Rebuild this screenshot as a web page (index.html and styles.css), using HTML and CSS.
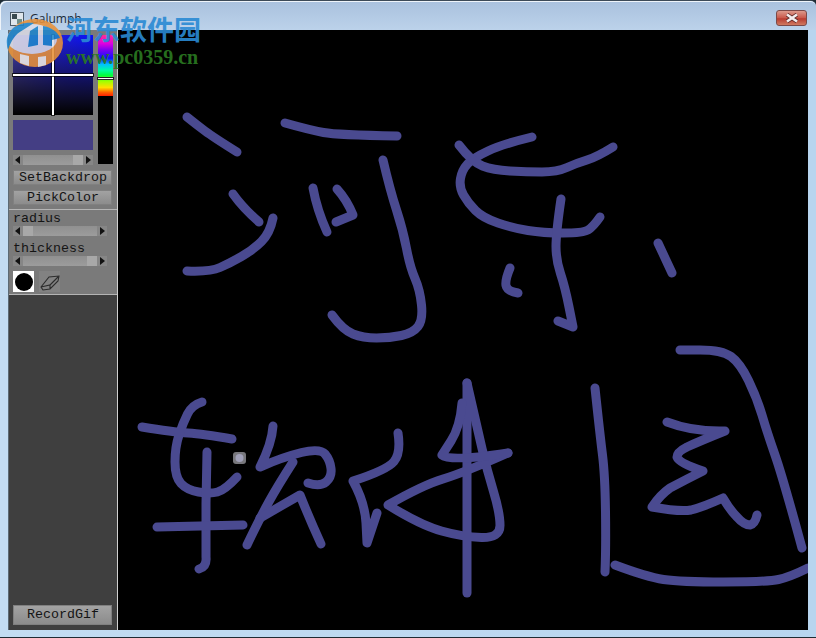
FILE: index.html
```html
<!DOCTYPE html>
<html lang="en">
<head>
  <meta charset="UTF-8">
  <title>Galumph</title>
  <link rel="stylesheet" href="styles.css">
</head>
<body>
  <div class="window">
    <div class="titlebar">
      <svg class="app-icon" width="14" height="14" viewBox="0 0 14 14">
        <rect x="0.5" y="0.5" width="13" height="13" fill="#dfe6ec" stroke="#4a5a68"/>
        <rect x="2" y="2" width="5" height="5" fill="#3a4a50"/>
        <rect x="7" y="7" width="5" height="5" fill="#6f8f8a"/>
      </svg>
      <span class="title">Galumph</span>
      <div class="close">
        <svg width="14" height="10" viewBox="0 0 14 10">
          <path d="M2 1.5 L12 8.5 M12 1.5 L2 8.5" stroke="#5a2a28" stroke-width="4"/>
          <path d="M2 1.5 L12 8.5 M12 1.5 L2 8.5" stroke="#f4eeee" stroke-width="2.6"/>
        </svg>
      </div>
    </div>
    <div class="main">
      <div class="sidebar">
        <div class="panel panel-color">
          <div class="picker">
            <div class="picker-left">
              <div class="palette">
                <div class="cross-v"></div>
                <div class="cross-h"></div>
              </div>
              <div class="swatch"></div>
              <div class="scroll">
                <span class="arrow arrow-l"></span>
                <span class="thumb thumb-end"></span>
                <span class="arrow arrow-r"></span>
              </div>
            </div>
            <div class="hue">
              <div class="hue-colors"><div class="hue-mark"></div></div>
            </div>
          </div>
          <button class="btn">SetBackdrop</button>
          <button class="btn">PickColor</button>
        </div>
        <div class="panel panel-brush">
          <div class="label">radius</div>
          <div class="scroll scroll-wide">
            <span class="arrow arrow-l"></span>
            <span class="thumb thumb-start"></span>
            <span class="arrow arrow-r"></span>
          </div>
          <div class="label">thickness</div>
          <div class="scroll scroll-wide">
            <span class="arrow arrow-l"></span>
            <span class="thumb thumb-end"></span>
            <span class="arrow arrow-r"></span>
          </div>
          <div class="tools">
            <div class="tool-brush"><div class="tool-dot"></div></div>
            <div class="tool-eraser">
              <svg width="20" height="20" viewBox="0 0 20 20">
                <path d="M1 15 L9 5 L19 4 L18 9 L10 17 L3 18 Z M1 15 L10 13 L10 17 M10 13 L18 5" fill="none" stroke="#2c2c2c" stroke-width="1.1"/>
              </svg>
            </div>
          </div>
        </div>
        <div class="panel-rest">
          <button class="btn btn-record">RecordGif</button>
        </div>
      </div>
      <div class="canvas">
        <svg class="drawing" width="690" height="600" viewBox="118 30 690 600">
          <g class="strokes">
            <path d="M187 117 Q197 125 205 131 Q213 137 237 152"/>
            <path d="M285 123 Q310 130 323.5 132.5 Q337 135 397 136"/>
            <path d="M383 160 Q390 190 396.5 210 Q403 230 406.5 248.5 Q410 267 415 278.5 Q420 290 421.5 305 Q423 320 418 326.5 Q413 333 401.5 335.5 Q390 338 376.5 338 Q363 338 353 334 Q343 330 332 315"/>
            <path d="M233 194 Q243 208 259 222"/>
            <path d="M273 218 Q270 233 261.5 241.5 Q253 250 241.5 256.5 Q230 263 220 267.5 Q210 272 187 271"/>
            <path d="M313 188 Q317 210 327 232"/>
            <path d="M337 189 Q347 200 353 215 L336 222"/>
            <path d="M532 137 Q503 144 488 151 Q473 158 467.5 164 Q462 170 460.5 178.5 Q459 187 463.5 195 Q468 203 475.5 210.5 Q483 218 498 223 Q513 228 528 230.5 Q543 233 563 233 Q583 233 588 230 Q593 227 600 217"/>
            <path d="M459 145 Q472 162 482.5 166 Q493 170 510 171 Q527 172 542 172 Q557 172 567 167.5 Q577 163 587 160 Q597 157 613 147"/>
            <path d="M561 199 Q556 233 556 246.5 Q556 260 560.5 273.5 Q565 287 569 307 L573 327 L558 321"/>
            <path d="M510 268 Q505 280 506 285.5 Q507 291 518 293"/>
            <path d="M658 243 L672 273"/>
            <path d="M142 427 Q173 432 188 433 Q203 434 232 439"/>
            <path d="M202 402 Q192 405 187.5 414 Q183 423 179 435 Q175 447 175 462 Q175 477 181 483.5 Q187 490 198.5 492 Q210 494 217.5 492 Q225 490 237 477"/>
            <path d="M207 452 L206 503 L206 557 Q207 567 199 569"/>
            <path d="M157 527 L243 525"/>
            <path d="M273 426 Q272 443 260 467 Q283 457 301.5 452.5 Q320 448 325 454 Q330 460 331 468.5 Q332 477 326 482 Q320 487 308 483"/>
            <path d="M293 462 Q277 487 268.5 502.5 Q260 518 247 545"/>
            <path d="M260 518 L300 495 Q310 520 321 544"/>
            <path d="M398 433 Q401 453 394 461.5 Q387 470 353 481 Q365 503 366 523 L367 543 L377 513"/>
            <path d="M508 453 Q463 473 443 479 Q423 485 388 505 Q420 525 441.5 531 Q463 537 481.5 537.5 Q500 538 500 525.5 Q500 513 493.5 491.5 Q487 470 482 448.5 Q477 427 467 383"/>
            <path d="M467 383 L467 593"/>
            <path d="M462 403 Q460 427 451 441 L442 455 Q450 462 508 453"/>
            <path d="M595 388 Q600 435 602.5 455 Q605 475 605.5 511.5 Q606 548 605 572"/>
            <path d="M615 565 Q647 577 663.5 579.5 Q680 582 723.5 582 Q767 582 778.5 579.5 Q790 577 808 568"/>
            <path d="M680 350 L700 350 Q722 350 731 356.5 Q740 363 748.5 380.5 Q757 398 762 415 Q767 432 775 455 Q783 478 802 548"/>
            <path d="M667 422 Q693 432 725 431 Q700 441 687 447 Q677 452 677 457 Q679 463 703 471 Q687 479 670 488 Q660 495 652 507 Q680 512 691 510 Q703 507 723 498 Q730 510 737 517 Q744 525 750 525 Q755 524 757 515"/>
          </g>
          <rect class="cursor" x="233" y="452" width="13" height="12" rx="3"/>
          <circle class="cursor-dot" cx="239.5" cy="458" r="4"/>
        </svg>
      </div>
    </div>
  </div>
  <div class="watermark">
    <svg class="wm-logo" width="66" height="70" viewBox="0 0 66 70">
      <ellipse cx="35" cy="43" rx="28" ry="24" fill="#e8913a"/>
      <path d="M20 54 L20 63 L29 66 L29 56 Z M38 57 L38 67 L46 65 L46 56 Z" fill="#f2eee8"/>
      <ellipse cx="32" cy="39" rx="25" ry="15" fill="#dcdce8"/>
      <path d="M8 50 C3 34 14 21 34 23 L23 30 C15 34 11 41 8 50 Z" fill="#1f86cc"/>
      <path d="M28 47 L30 31 L38 26 L38 45 Z" fill="#1f86cc"/>
      <path d="M43 26 C51 27 58 32 60 38 L52 40 L52 46 L43 45 Z" fill="#1f86cc"/>
    </svg>
    <div class="wm-text">
      <div class="wm-name">河东软件园</div>
      <div class="wm-url">www.pc0359.cn</div>
    </div>
  </div>
</body>
</html>
```

FILE: styles.css
```css
html, body {
  margin: 0;
  padding: 0;
  height: 100%;
  overflow: hidden;
}

body {
  width: 816px;
  height: 638px;
  position: relative;
  background-color: #1f2b33;
}

.window {
  height: 637px;
  display: flex;
  flex-direction: column;
  border-radius: 6px 6px 0 0;
  border-top: 1px solid #3c4a58;
  box-sizing: border-box;
  background: linear-gradient(to right, #c3dcf2 0, #b8d5ef 100%);
}

.titlebar {
  height: 29px;
  display: flex;
  align-items: center;
  padding: 0 10px;
  background: linear-gradient(to bottom, #a9c1de 0%, #bcd2ea 100%);
  border-radius: 6px 6px 0 0;
  box-shadow: inset 1px 1px 0 #eef4fa;
}

.app-icon {
  flex: none;
  margin-top: 7px;
}

.title {
  margin: 6px 0 0 6px;
  font-family: "Open Sans", sans-serif;
  font-size: 12px;
  color: #1c2a38;
}

.close {
  margin: 5px -1px 0 auto;
  width: 31px;
  height: 16px;
  box-sizing: border-box;
  display: flex;
  align-items: center;
  justify-content: center;
  border: 1px solid #7c4a48;
  border-radius: 3px;
  background: linear-gradient(to bottom, #dc9a8c 0%, #c9584a 50%, #b83c30 55%, #d07a60 100%);
}

.main {
  flex: 1;
  display: flex;
  padding: 0 8px 7px 8px;
  min-height: 0;
}

.sidebar {
  width: 110px;
  flex: none;
  display: flex;
  flex-direction: column;
  background-color: #7a7a7a;
  border-left: 1px solid #5c6a74;
  border-right: 1px solid #d0d0d0;
  box-sizing: border-box;
}

.panel {
  padding: 5px 4px 0 4px;
  background-color: #7a7a7a;
}

.panel-color {
  height: 180px;
  box-sizing: border-box;
  border-bottom: 1px solid #b4b4b4;
}

.picker {
  display: flex;
  gap: 5px;
}

.picker-left {
  width: 80px;
}

.palette {
  width: 80px;
  height: 80px;
  position: relative;
  background:
    linear-gradient(to bottom, rgba(0, 0, 0, 0) 0%, #000 100%),
    radial-gradient(circle at 100% 0, #0a10f8 0%, #2a28d0 45%, #6a62b4 100%);
}

.cross-v {
  position: absolute;
  left: 39px;
  top: 0;
  bottom: 0;
  width: 2px;
  background-color: #fff;
  box-shadow: 0 0 0 1px rgba(0, 0, 0, 0.7);
}

.cross-h {
  position: absolute;
  top: 39px;
  left: 0;
  right: 0;
  height: 2px;
  background-color: #fff;
  box-shadow: 0 0 0 1px rgba(0, 0, 0, 0.7);
}

.swatch {
  height: 30px;
  margin-top: 5px;
  background-color: #443e84;
}

.scroll {
  height: 10px;
  margin-top: 5px;
  display: flex;
  justify-content: space-between;
  align-items: stretch;
  background: linear-gradient(to bottom, #909090, #9c9c9c);
  position: relative;
}

.scroll-wide {
  width: 94px;
  margin-top: 0;
}

.arrow {
  width: 10px;
  background-color: #868686;
  position: relative;
}

.arrow::after {
  content: "";
  position: absolute;
  top: 1px;
  border-top: 4px solid transparent;
  border-bottom: 4px solid transparent;
}

.arrow-l::after {
  left: 2px;
  border-right: 5px solid #111;
}

.arrow-r::after {
  right: 2px;
  border-left: 5px solid #111;
}

.thumb {
  position: absolute;
  top: 0;
  width: 10px;
  height: 10px;
  background-color: #a8a8a8;
}

.thumb-start {
  left: 10px;
}

.thumb-end {
  right: 10px;
}

.hue {
  width: 15px;
  height: 129px;
  background-color: #000;
}

.hue-colors {
  height: 61px;
  position: relative;
  background: linear-gradient(to bottom,
    #ff3090 0%, #e000e0 14%, #8000f0 24%, #1010ff 38%, #00c0ff 48%,
    #00ffa0 58%, #00ff40 66%, #a0ff00 76%, #ffe000 86%, #ff6000 94%, #ff2000 100%);
}

.hue-mark {
  position: absolute;
  left: 0;
  right: 0;
  top: 43px;
  height: 1px;
  background-color: #fff;
  box-shadow: 0 0 0 1px #222;
}

.btn {
  display: block;
  width: 99px;
  padding: 0 0 0 1px;
  border: none;
  font-family: "Liberation Mono", monospace;
  font-size: 13.33px;
  color: #141414;
  text-align: center;
  height: 15px;
  line-height: 15px;
  margin-top: 5px;
  background: linear-gradient(to bottom, #a4a4a4, #8a8a8a);
  box-shadow: inset 0 0 0 1px #808080;
}

.panel-brush {
  height: 85px;
  box-sizing: border-box;
  padding-top: 2px;
  border-bottom: 1px solid #b4b4b4;
}

.label {
  font-family: "Liberation Mono", monospace;
  font-size: 13.33px;
  line-height: 14px;
  height: 14px;
  color: #141414;
}

.panel-brush .scroll + .label {
  margin-top: 6px;
}

.tools {
  display: flex;
  gap: 5px;
  margin-top: 5px;
}

.tool-brush {
  width: 21px;
  height: 21px;
  background-color: #fff;
  display: flex;
  align-items: center;
  justify-content: center;
}

.tool-dot {
  width: 18px;
  height: 18px;
  border-radius: 50%;
  background-color: #000;
}

.tool-eraser {
  width: 21px;
  height: 21px;
  display: flex;
  align-items: center;
  justify-content: center;
  background-color: #828282;
}

.panel-rest {
  flex: 1;
  display: flex;
  align-items: flex-end;
  padding: 0 4px 5px 4px;
  background-color: #3f3f3f;
}

.btn-record {
  height: 20px;
  line-height: 20px;
  margin-top: 0;
}

.canvas {
  flex: 1;
  background-color: #000;
  overflow: hidden;
}

.drawing {
  display: block;
}

.strokes path {
  fill: none;
  stroke: #4a4a90;
  stroke-width: 9;
  stroke-linecap: round;
  stroke-linejoin: round;
}

.cursor {
  fill: #77777c;
}

.cursor-dot {
  fill: #a0a0b8;
}

.watermark {
  position: absolute;
  left: 0;
  top: 0;
  display: flex;
  pointer-events: none;
}

.wm-logo {
  opacity: 0.88;
  flex: none;
}

.wm-text {
  margin: 11px 0 0 0;
  width: 150px;
}

.wm-name {
  font-family: "Noto Sans CJK SC", sans-serif;
  font-weight: 700;
  font-size: 27px;
  line-height: 36px;
  color: #2a8ad4;
  opacity: 0.9;
}

.wm-url {
  font-family: "Liberation Serif", serif;
  font-weight: 700;
  font-size: 20px;
  line-height: 20px;
  margin-top: 0;
  color: #2b7a22;
  opacity: 0.9;
}
```
